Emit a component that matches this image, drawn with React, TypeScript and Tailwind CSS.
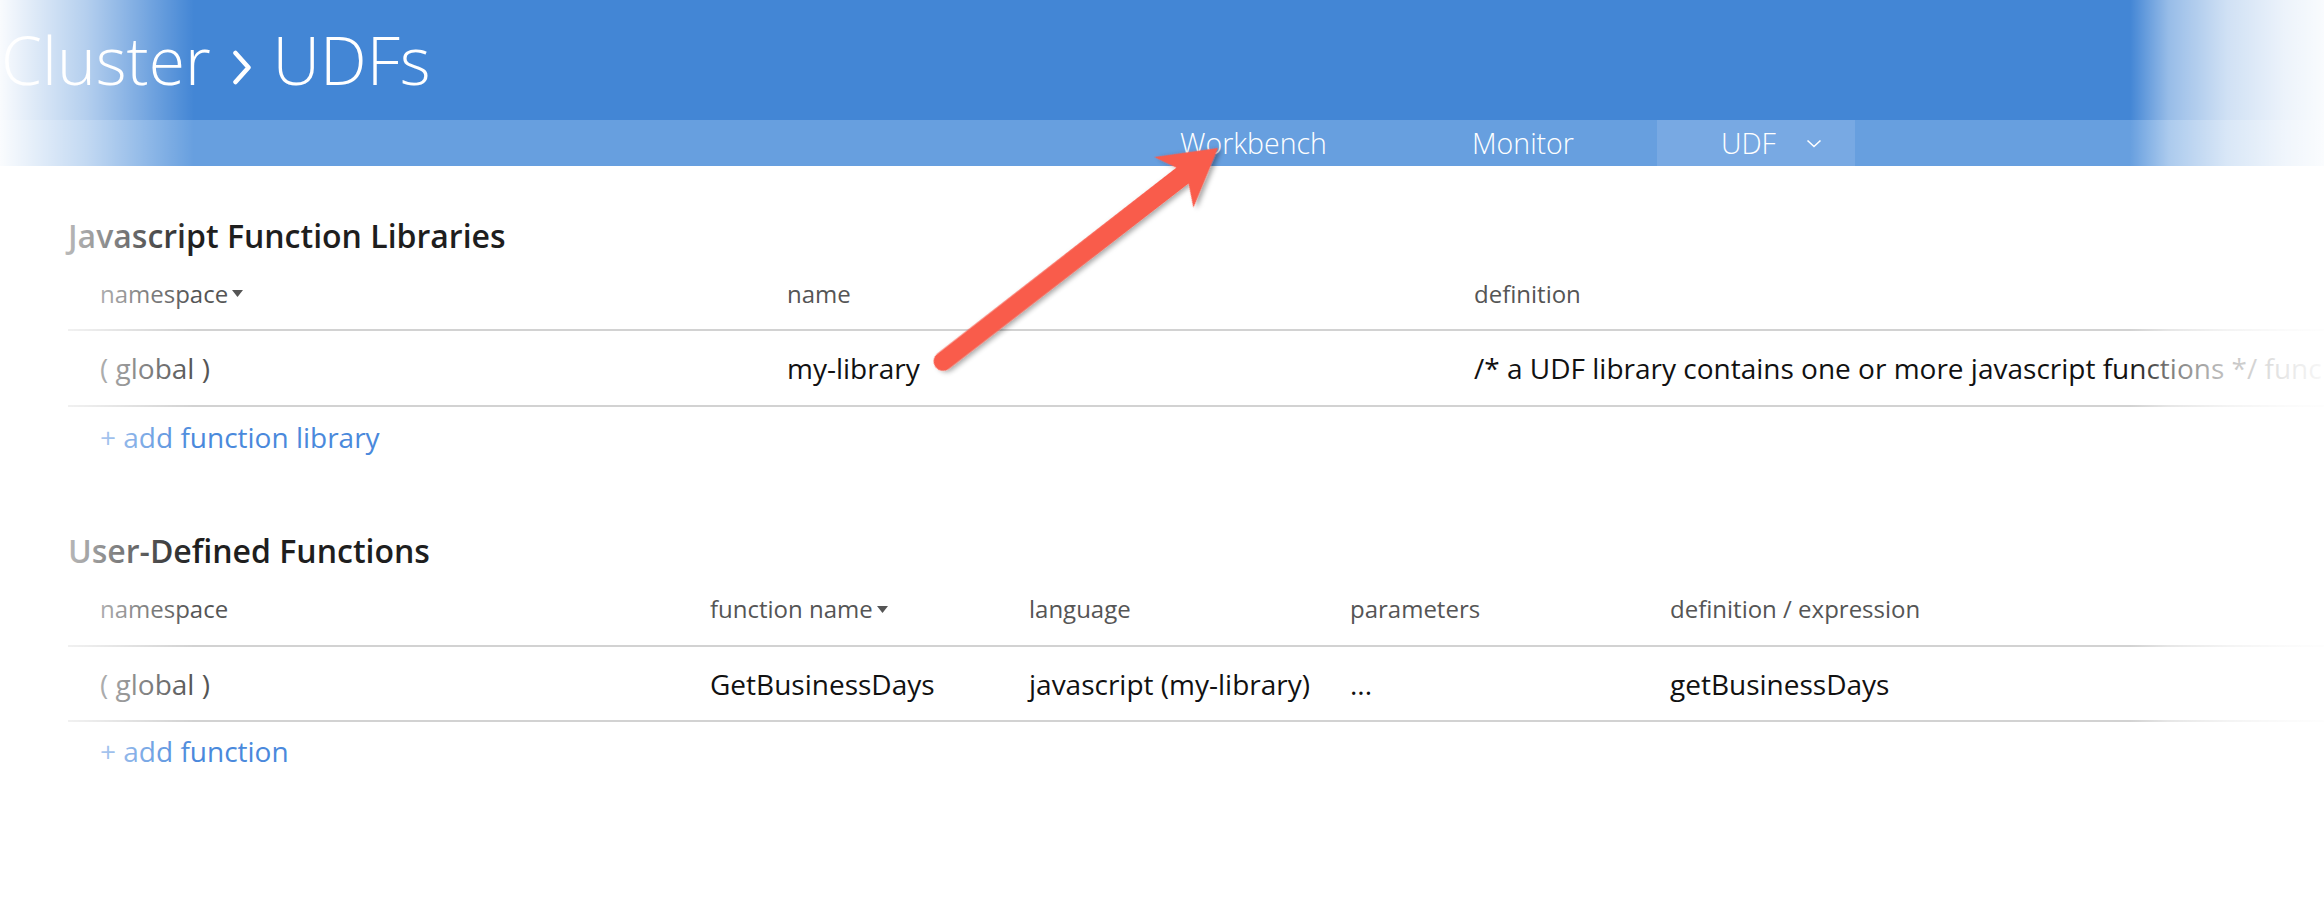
import React from 'react';

const font = "font-['Open_Sans','Liberation_Sans',sans-serif]";

function Caret() {
  return (
    <svg width="11" height="7" viewBox="0 0 11 7" className="ml-[4px] inline-block">
      <path d="M0 0 L11 0 L5.5 7 Z" fill="#555" />
    </svg>
  );
}

function Chevron() {
  return (
    <svg width="16" height="9" viewBox="0 0 16 9">
      <path d="M1.5 1.5 L8 7.5 L14.5 1.5" fill="none" stroke="white" strokeWidth="1.6" />
    </svg>
  );
}

function Separator() {
  return (
    <svg width="20" height="35" viewBox="0 0 20 35" className="ml-[21px] mr-[21px] mb-[3px]">
      <path d="M3.5 3 L16.5 17.5 L3.5 32" fill="none" stroke="white" strokeWidth="4.5" strokeLinecap="round" strokeLinejoin="round" />
    </svg>
  );
}

export default function App() {
  return (
    <div className={`relative h-[898px] w-full overflow-hidden bg-white ${font}`}>
      {/* Header */}
      <header>
        <div className="h-[120px] bg-[#4386D5] pt-[26px] pl-[1px]">
          <h1 className="flex items-baseline text-[66px] leading-none font-light text-white whitespace-nowrap">
            <span>Cluster</span>
            <Separator />
            <span>UDFs</span>
          </h1>
        </div>
        <nav className="h-[46px] bg-[#679FDF] flex pl-[1180px] text-white text-[28.5px] font-light">
          <div className="w-[292px] flex items-center">Workbench</div>
          <div className="w-[185px] flex items-center">Monitor</div>
          <div className="w-[198px] flex items-center bg-[#78A9E3] pl-[64px]">
            <span>UDF</span>
            <span className="ml-[30px] flex items-center">
              <Chevron />
            </span>
          </div>
        </nav>
      </header>

      {/* Javascript Function Libraries */}
      <section className="mt-[48px] ml-[68px]">
        <h2 className="h-[44px] flex items-center text-[32px] font-semibold text-[#1e1e1e] whitespace-nowrap">
          Javascript Function Libraries
        </h2>
        <div className="h-[73px] flex items-center border-b-2 border-[#d2d2d2] text-[24px] text-[#555]">
          <div className="w-[687px] pl-[32px] flex items-center">
            namespace
            <Caret />
          </div>
          <div className="w-[687px] pl-[32px]">name</div>
          <div className="flex-1 pl-[32px]">definition</div>
        </div>
        <div className="h-[76px] flex items-center border-b-2 border-[#d2d2d2] text-[28px] text-[#111] whitespace-nowrap">
          <div className="w-[687px] shrink-0 pl-[32px] text-[#555]">( global )</div>
          <div className="w-[687px] shrink-0 pl-[32px]">my-library</div>
          <div className="flex-1 pl-[32px] overflow-hidden">
            /* a UDF library contains one or more javascript functions */ func
          </div>
        </div>
        <div className="h-[60px] flex items-center pl-[32px] text-[28px] text-[#4A89DC]">
          + add function library
        </div>
      </section>

      {/* User-Defined Functions */}
      <section className="mt-[62px] ml-[68px]">
        <h2 className="h-[44px] flex items-center text-[32px] font-semibold text-[#1e1e1e] whitespace-nowrap">
          User-Defined Functions
        </h2>
        <div className="h-[74px] flex items-center border-b-2 border-[#d2d2d2] text-[24px] text-[#555] whitespace-nowrap">
          <div className="w-[610px] shrink-0 pl-[32px]">namespace</div>
          <div className="w-[319px] shrink-0 pl-[32px] flex items-center">
            function name
            <Caret />
          </div>
          <div className="w-[321px] shrink-0 pl-[32px]">language</div>
          <div className="w-[320px] shrink-0 pl-[32px]">parameters</div>
          <div className="flex-1 pl-[32px]">definition / expression</div>
        </div>
        <div className="h-[75px] flex items-center border-b-2 border-[#d2d2d2] text-[28px] text-[#111] whitespace-nowrap">
          <div className="w-[610px] shrink-0 pl-[32px] text-[#555]">( global )</div>
          <div className="w-[319px] shrink-0 pl-[32px]">GetBusinessDays</div>
          <div className="w-[321px] shrink-0 pl-[32px]">javascript (my-library)</div>
          <div className="w-[320px] shrink-0 pl-[32px]">...</div>
          <div className="flex-1 pl-[32px]">getBusinessDays</div>
        </div>
        <div className="h-[58px] flex items-center pl-[32px] text-[28px] text-[#4A89DC]">
          + add function
        </div>
      </section>

      {/* Annotation arrow */}
      <svg className="absolute left-0 top-0 pointer-events-none" width="2324" height="898">
        <defs>
          <filter id="arrowShadow" x="-20%" y="-20%" width="140%" height="140%">
            <feDropShadow dx="2" dy="3" stdDeviation="2.5" floodColor="#000" floodOpacity="0.35" />
          </filter>
        </defs>
        <g transform="translate(1218 148) rotate(-37.8)" filter="url(#arrowShadow)">
          <path
            d="M0 0 L-56 -32 L-45 -10 L-348 -9.5 A9.5 9.5 0 0 0 -348 9.5 L-45 10 L-56 32 Z"
            fill="#F95B4B"
          />
        </g>
      </svg>

      {/* Edge fades */}
      <div className="absolute left-0 top-0 h-full w-[194px] pointer-events-none bg-[linear-gradient(to_right,rgba(255,255,255,0.97)_0%,rgba(255,255,255,0.6)_45%,rgba(255,255,255,0.33)_70%,rgba(255,255,255,0)_100%)]" />
      <div className="absolute right-0 top-0 h-full w-[194px] pointer-events-none bg-[linear-gradient(to_left,rgba(255,255,255,0.97)_0%,rgba(255,255,255,0.9)_20%,rgba(255,255,255,0.75)_50%,rgba(255,255,255,0.45)_80%,rgba(255,255,255,0)_100%)]" />
    </div>
  );
}
